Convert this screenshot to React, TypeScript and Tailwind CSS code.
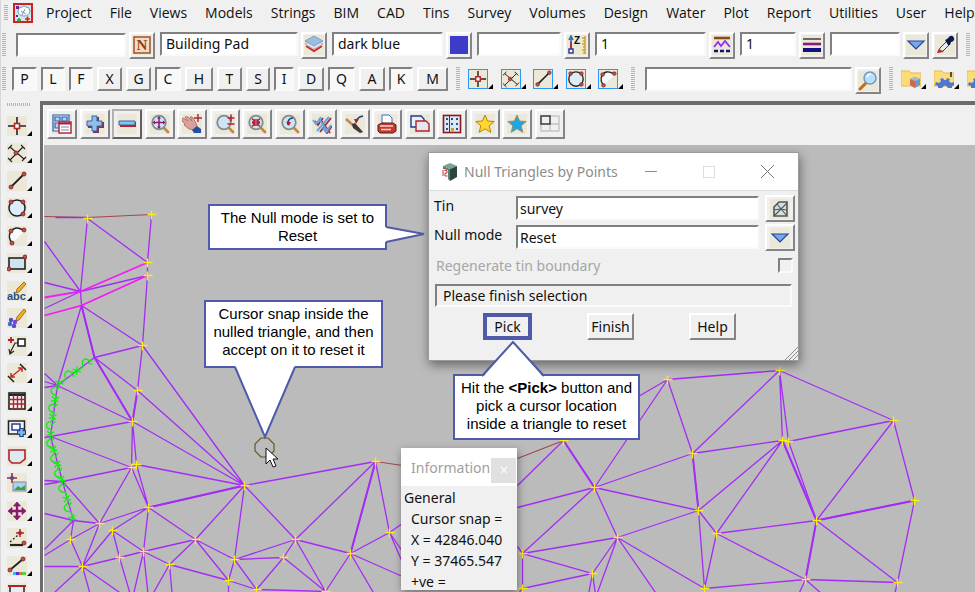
import React from "react";

const UI_FONT = "font-['Noto_Sans','Open_Sans',sans-serif]";
const RAISED =
  "border-2 border-t-white border-l-white border-r-[#858585] border-b-[#858585] bg-[#f0f0f0]";
const SUNKEN =
  "border-2 border-t-[#808080] border-l-[#808080] border-r-[#fafafa] border-b-[#fafafa]";

const INK = "#222222";
const RED = "#b3202c";
const NAVY = "#1c3f8c";

/* ------------------------------------------------------------------ icons */

function Dot({ x, y }: { x: number; y: number }) {
  return <circle cx={x} cy={y} r="2" fill="#c05050" stroke="#7a2020" strokeWidth="0.8" />;
}

const lens = (
  <>
    <path d="M14 14l4 4" stroke="#c08a3a" strokeWidth="2.6" strokeLinecap="round" />
    <circle cx="9" cy="8.500" r="6.800" fill="#cfe4f3" stroke="#7f8c96" strokeWidth="1.800" />
  </>
);

const STAR = "M10 1l2.600 6 6.600.500-5 4.300 1.600 6.500L10 14.800l-5.800 3.500 1.600-6.500-5-4.300 6.600-.500z";

const glyphs: Record<string, React.ReactNode> = {
  point: (
    <g fill="none">
      <path d="M1 10h6M13 10h6M10 1v6M10 13v6" stroke={INK} strokeWidth="1.600" />
      <rect x="7.500" y="7.500" width="5" height="5" fill="#fff" stroke="#c02020" strokeWidth="1.600" />
    </g>
  ),
  cross: (
    <g stroke={INK} strokeWidth="1.100" fill="none">
      <path d="M3 4l14 12M16 4L3 17M1 6l4-4M14 2l4 4M15 18l4-4M1 15l4 4" />
      <Dot x={9} y={10} />
    </g>
  ),
  line: (
    <g>
      <path d="M4 16L17 3" stroke={INK} strokeWidth="1.800" />
      <Dot x={4} y={16} />
      <Dot x={17} y={3} />
    </g>
  ),
  circle: (
    <g>
      <circle cx="10" cy="10" r="8" fill="#dcecf8" stroke={INK} strokeWidth="1.500" />
      <Dot x={4} y={4} />
      <Dot x={16} y={4} />
      <Dot x={16} y={16} />
    </g>
  ),
  arc: (
    <g>
      <path d="M16 4Q7-1 3 7Q1 12 5 17L17 6z" fill="#f6fafc" />
      <path d="M16 4Q7-1 3 7Q1 12 5 17" fill="none" stroke={INK} strokeWidth="1.500" />
      <Dot x={4} y={5} />
      <Dot x={17} y={4} />
      <Dot x={5} y={17} />
    </g>
  ),
  rect: (
    <g>
      <rect x="2" y="5" width="16" height="11" fill="#cfe3ee" stroke={INK} strokeWidth="1.600" />
      <Dot x={18} y={4} />
      <Dot x={2} y={16} />
    </g>
  ),
  text: (
    <g>
      <path d="M17 1l2 2-7 8-3 1 1-4z" fill="#f0b020" stroke="#8a5a10" strokeWidth="0.800" />
      <text x="0" y="19" fontSize="11" fontWeight="bold" fill="#1d4e80" fontFamily="Liberation Sans, sans-serif">abc</text>
    </g>
  ),
  paint: (
    <g>
      <path d="M17 1l2 2-7 9-3 1 1-4z" fill="#f0b020" stroke="#8a5a10" strokeWidth="0.800" />
      <g fill="#5a4ad0">
        <circle cx="4" cy="12" r="2.200" />
        <circle cx="8" cy="14" r="2.200" fill="#7a40e0" />
        <circle cx="3" cy="16" r="2.200" fill="#3070d0" />
        <circle cx="7" cy="18" r="2.200" />
      </g>
    </g>
  ),
  leader: (
    <g fill="none">
      <path d="M1 4h6M4 1v6" stroke={RED} strokeWidth="1.800" />
      <rect x="11" y="3" width="7" height="7" fill="#fff" stroke={INK} strokeWidth="1.600" />
      <path d="M11 7H8L3 17M2 13l1 5 4-3" stroke={INK} strokeWidth="1.200" />
    </g>
  ),
  dimension: (
    <g fill="none">
      <path d="M1 13l6 6M13 1l6 6" stroke={INK} strokeWidth="1.500" />
      <path d="M4 14L15 5M4 10v4h4M11 5h4v4" stroke="#c03030" strokeWidth="1.500" />
    </g>
  ),
  grid: (
    <g fill="none">
      <rect x="2" y="2" width="16" height="16" fill="#f4f4f4" stroke={INK} strokeWidth="1.600" />
      <path d="M2 4h16" stroke={INK} strokeWidth="2" />
      <path d="M6.500 4v14M10.500 4v14M14.500 4v14M2 8.500h16M2 13h16" stroke={RED} strokeWidth="1.400" />
    </g>
  ),
  monitor: (
    <g>
      <rect x="1.500" y="3" width="16" height="13" fill="#eef3f8" stroke={INK} strokeWidth="1.500" />
      <rect x="5" y="6" width="8" height="6" fill="#fff" stroke="#2030a0" strokeWidth="1.400" />
      <path d="M14.500 10v9M10 14.500h9" stroke={NAVY} strokeWidth="4.600" />
      <path d="M14.500 11v7M11 14.500h7" stroke="#80b8e8" strokeWidth="2.400" />
    </g>
  ),
  polygon: <path d="M2 4h16v9l-5 4H5l-3-3z" fill="#dfe9f2" stroke={RED} strokeWidth="1.600" />,
  image: (
    <g>
      <path d="M5 0v10M0 5h10" stroke={RED} strokeWidth="1.600" />
      <circle cx="5" cy="5" r="2" fill="#3a50a0" />
      <rect x="6" y="9" width="13" height="9" fill="#a8d4f4" stroke="#888" />
      <path d="M7 17l4-4 3 2 4-3v5z" fill="#40a040" />
    </g>
  ),
  move: (
    <g fill="#8a1a70" stroke="#8a1a70">
      <path d="M10 4v12M4 10h12" strokeWidth="2.400" />
      <path d="M10 1l3.500 4h-7zM10 19l3.500-4h-7zM1 10l4-3.500v7zM19 10l-4-3.500v7z" strokeWidth="0.800" />
    </g>
  ),
  survey: (
    <g>
      <path d="M3 17h13" stroke={INK} strokeWidth="2.200" />
      <path d="M3 14l8-7" stroke={INK} strokeWidth="1.300" strokeDasharray="2 2" />
      <path d="M13 1v8M9 5h8" stroke={RED} strokeWidth="1.500" />
      <circle cx="13" cy="5" r="2" fill={RED} />
      <Dot x={17} y={15} />
    </g>
  ),
  colour: (
    <g>
      <path d="M3 14L16 3" stroke={INK} strokeWidth="1.800" />
      <Dot x={3} y={14} />
      <Dot x={16} y={3} />
      <path d="M6 17.500h3" stroke="#20c0f0" strokeWidth="3" />
      <path d="M9 17.500h3" stroke="#5030e0" strokeWidth="3" />
      <path d="M12 17.500h3" stroke="#f07020" strokeWidth="3" />
      <path d="M15 17.500h4" stroke="#50d040" strokeWidth="3" />
    </g>
  ),
  frame: (
    <g>
      <path d="M3 3h14v14H3z" fill="#e6eef4" stroke={INK} strokeWidth="1.500" />
      <path d="M1 3h18" stroke={RED} strokeWidth="2" />
    </g>
  ),
  windows: (
    <g fill="#dcecf8" stroke="#2f5fae" strokeWidth="1.200">
      <path d="M1 1h16v16H1z" />
      <path d="M3 3h5v4H3zM10 3h5v4h-5zM3 9h5v5H3z" fill="#b8d4f0" />
      <rect x="7" y="8" width="12" height="11" fill="#fff" stroke={RED} strokeWidth="1.400" />
      <path d="M9 13h8M9 16h8" stroke="#6c8ec8" />
      <path d="M7 9.500h12" stroke={RED} strokeWidth="2" />
    </g>
  ),
  plus: (
    <g>
      <path d="M8 3h6v5h5v6h-5v5H8v-5H3V8h5z" fill="#8a3050" />
      <path d="M7 2h5v5h5v5h-5v5H7v-5H2V7h5z" fill="#8ec0ea" stroke="#2f66a8" />
    </g>
  ),
  minus: (
    <g>
      <path d="M3 8h16v5H3z" fill={RED} />
      <path d="M2 7h16v4H2z" fill="#8ec0ea" stroke="#2f66a8" />
    </g>
  ),
  zoomAll: (
    <g>
      {lens}
      <path d="M9 3v11M4 8.500h10" stroke="#8a1a70" strokeWidth="1.500" />
      <path d="M9 2l2 2.500H7zM9 15l2-2.500H7zM2.500 8.500L5 6.500v4zM15.500 8.500L13 6.500v4z" fill="#8a1a70" />
    </g>
  ),
  pan: (
    <g>
      <path d="M0 5q1-2 3 0l3 2-3-4q1-1 3 0l4 4-2-4q2-1 3 1l3 5 1 3-3 4-5-1-5-4 1-1-3-3z" fill="#dba09a" stroke="#a86860" strokeWidth="0.800" />
      <path d="M10 16l5-4 4 3v4h-7z" fill="#26509a" />
      <path d="M16 0v8M12 4h8" stroke={RED} strokeWidth="1.400" />
    </g>
  ),
  zoomInOut: (
    <g>
      {lens}
      <path d="M12.500 4h7M16 0.500v7M12.500 10h7" stroke={RED} strokeWidth="1.600" />
    </g>
  ),
  zoomShrink: (
    <g>
      {lens}
      <path d="M5 4.500l3 3M13 4.500l-3 3M5 12.500l3-3M13 12.500l-3-3M8 5v3H5M10 5v3h3M8 12V9H5M10 12V9h3" stroke={RED} strokeWidth="1.400" fill="none" />
    </g>
  ),
  zoomBack: (
    <g>
      {lens}
      <path d="M8 11V8q1-4 5-4" fill="none" stroke={NAVY} strokeWidth="1.600" />
      <path d="M6 8h5l-2 4z" fill={RED} />
    </g>
  ),
  ticks: (
    <g fill="none">
      <path d="M2 6l3 4 5-7M8 5l9 13M18 3L7 17M11 14l3 4 5-7" stroke="#9a3040" strokeWidth="1.800" transform="translate(1 1)" />
      <path d="M1 6l3 4 5-7M7 5l9 13M17 3L5 17M11 14l3 4 5-7" stroke="#6aa4e0" strokeWidth="2" />
    </g>
  ),
  brush: (
    <g>
      <path d="M1 5l8 7" stroke="#c08a50" strokeWidth="2.600" />
      <path d="M7 10l3-1 8 9-3 1-7-5z" fill="#3a3a3a" />
      <path d="M11 8q1-5 7-6" fill="none" stroke="#204080" strokeWidth="1.500" />
      <path d="M9 5h5l-3 5z" fill={RED} />
    </g>
  ),
  print: (
    <g>
      <path d="M5 9V1h7l3 3v6z" fill="#fff" stroke="#3a70c0" />
      <path d="M1 11l4-2h11l3 2v6l-3 2H3l-2-2z" fill="#c43a30" stroke="#6c1510" />
      <path d="M3 12h13M4 15.500h10" stroke="#f3d7c8" strokeWidth="1.400" />
    </g>
  ),
  copy: (
    <g strokeWidth="1.400">
      <path d="M1 2h10l3 3v8H1z" fill="#e8f1f9" stroke={NAVY} />
      <path d="M6 7h10l3 3v7H6z" fill="#e4e8ee" stroke={RED} />
    </g>
  ),
  plan: (
    <g>
      <rect x="1.500" y="1.500" width="17" height="17" fill="#dce8f4" stroke="#8a1a20" strokeWidth="1.600" />
      <path d="M4 4h2v2H4zM9 4h2v2H9zM14 4h2v2h-2zM4 9h2v2H4zM9 9h2v2H9zM14 9h2v2h-2zM4 14h2v2H4zM14 14h2v2h-2z" fill="#28508c" />
      <path d="M9 14h3v3H9z" fill="#d0a020" />
      <path d="M7.500 2v16" stroke="#8a1a20" />
    </g>
  ),
  starGold: <path d={STAR} fill="#ffd72e" stroke="#b98010" />,
  starBlue: <path d={STAR} fill="#18a8e8" stroke="#b08a50" />,
  layout: (
    <g fill="none">
      <path d="M10 2h9v15H1V10" stroke="#c4c4c4" strokeWidth="1.400" />
      <path d="M10 10h9M10 10v7" stroke="#c4c4c4" strokeWidth="1.400" />
      <rect x="1" y="2" width="9" height="8" stroke="#444" strokeWidth="1.600" />
    </g>
  ),
  name: (
    <g>
      <rect x="2" y="2" width="16" height="16" fill="#f0ddc8" stroke="#a04818" strokeWidth="1.400" />
      <text x="10" y="15" textAnchor="middle" fontSize="15" fontWeight="bold" fill="#983c0c" fontFamily="Liberation Serif, serif">N</text>
    </g>
  ),
  layers: (
    <g>
      <path d="M2 11l8 5 8-5" fill="none" stroke="#d02828" strokeWidth="2" />
      <path d="M1 9l9 5 9-5-9-5z" fill="#dfe6ee" stroke="#9ab" strokeWidth="0.800" />
      <path d="M1 6l9 5 9-5-9-5z" fill="#9dbde0" stroke="#6f94bd" strokeWidth="0.800" />
    </g>
  ),
  swatch: <rect x="1" y="1" width="18" height="18" fill="#3c3cc8" />,
  height: (
    <g>
      <path d="M4 14V3M2 5l2-4 2 4" stroke="#3070b0" strokeWidth="1.600" fill="none" />
      <path d="M4 7v7" stroke="#b02020" strokeWidth="1.600" />
      <rect x="2" y="14" width="4" height="4" fill="#fff" stroke="#2030a0" strokeWidth="1.400" />
      <text x="7" y="9" fontSize="10" fontWeight="bold" fill="#111" fontFamily="Liberation Sans, sans-serif">Z</text>
      <path d="M18 1v18M15 3h3M16 6h2M15 9h3M16 12h2M15 15h3M16 18h2" stroke="#d0a030" strokeWidth="1.400" />
    </g>
  ),
  breakline: (
    <g fill="none">
      <path d="M2 3h16" stroke="#8a4a18" strokeWidth="2.600" />
      <path d="M2 12l4-5 3 4 4-5 5 6" stroke="#9030e8" strokeWidth="1.800" />
      <path d="M2 16h16" stroke="#101080" strokeWidth="2.600" strokeDasharray="4 2" />
    </g>
  ),
  weights: (
    <g>
      <path d="M1 4h18" stroke="#333" strokeWidth="1.400" />
      <path d="M1 9h18" stroke="#8a1a80" strokeWidth="2.600" />
      <path d="M1 15h18" stroke="#101080" strokeWidth="4" />
    </g>
  ),
  down: <path d="M2 6h16l-8 8z" fill="#78a8ea" stroke="#2444a0" strokeWidth="1.200" />,
  picker: (
    <g>
      <path d="M3 17l2-4 7-7 3 3-7 7z" fill="#e8eef4" stroke="#444" />
      <path d="M2 18l2-4 5 3z" fill="#c02828" />
      <path d="M10 5l2-1 3-3q3-1 4 2t-3 4l-1 3-2 0z" fill="#101850" />
    </g>
  ),
  search: (
    <g>
      <path d="M2 18l6-6" stroke="#c06c20" strokeWidth="3" strokeLinecap="round" />
      <circle cx="12" cy="7" r="6" fill="#b8e0fa" stroke="#6a9cc8" strokeWidth="1.500" />
      <path d="M9 6q1-3 4-3" stroke="#fff" strokeWidth="1.500" fill="none" />
    </g>
  ),
  folderCube: (
    <g>
      <path d="M0 2h8l2 2h10v13H0z" fill="#fbdc78" stroke="#e6bc50" />
      <path d="M9 10l5-2 5 2v6l-5 3-5-3z" fill="#6a98cc" />
      <path d="M9 10l5 2v7l-5-3z" fill="#d06848" />
      <path d="M9 10l5-2 5 2-5 2z" fill="#a8b8c4" />
    </g>
  ),
  folderGear: (
    <g>
      <path d="M0 2h8l2 2h10v13H0z" fill="#fbdc78" stroke="#e6bc50" />
      <path d="M4 19v-2l-3-1 1-3 3 1 2-2-1-2 3-1 1 2h2l1-2 3 1-1 2 2 2 3-1 1 3-3 1v2h-4q-3-5-6 0z" fill="#4c78d0" />
      <path d="M17 3v5" stroke="#222" strokeWidth="1.500" />
    </g>
  ),
  tin: (
    <g stroke="#555" strokeWidth="1.100">
      <path d="M4 17V8l5-5h8v14z" fill="#cfe0e4" strokeWidth="1.600" />
      <path d="M4 17L17 4M7 5l10 12M4 11l6-1 7 1" fill="none" />
    </g>
  ),
  app: (
    <g>
      <rect x="1" y="1" width="18" height="18" fill="#cfe8ec" stroke="#d02020" strokeWidth="2" />
      <path d="M5 8q0-4 4-4 2-2 4 0 4 0 4 4-1 5-6 5-6 0-6-5z" fill="#fff" stroke="#60a8b8" />
      <path d="M3 3h3v3H3zM3 12h2v2H3z" fill="#7020a0" />
      <path d="M12 16h5M14.500 13.500v5" stroke="#e02020" strokeWidth="1.600" />
      <path d="M4 17h4M6 15v4" stroke="#20a030" strokeWidth="1.600" />
      <path d="M8 8l5 3M12 6l-3 6" stroke="#7890c0" />
    </g>
  ),
};

function Glyph({ name, size = "h-5 w-5", tint = true }: { name: string; size?: string; tint?: boolean }) {
  return (
    <svg viewBox="0 0 20 20" aria-hidden="true" className={`${size} shrink-0 ${tint ? "bg-[#ece8d8]" : ""}`}>
      {glyphs[name]}
    </svg>
  );
}

/* --------------------------------------------------------------- controls */

function Grip({ className = "h-6" }: { className?: string }) {
  return (
    <span
      className={`${className} w-1 shrink-0 bg-[repeating-linear-gradient(to_bottom,#b4b4b4_0_1px,transparent_1px_2px)]`}
    />
  );
}

function IconButton({ name, tint = true }: { name: string; tint?: boolean }) {
  return (
    <button type="button" aria-label={name} className={`flex h-[27px] w-[26px] shrink-0 items-center justify-center ${RAISED}`}>
      <Glyph name={name} tint={tint} />
    </button>
  );
}

function FlyoutButton({ name, outlined = false }: { name: string; outlined?: boolean }) {
  return (
    <button type="button" aria-label={name} className="flex shrink-0 items-end">
      <span className={outlined ? "border border-[#2f95f0]" : ""}>
        <Glyph name={name} size={outlined ? "block h-[18px] w-[18px]" : "block h-5 w-5"} tint={!name.startsWith("folder")} />
      </span>
      <svg viewBox="0 0 5 5" className="h-[5px] w-[5px]" aria-hidden="true">
        <path d="M5 0v5H0z" fill="#000" />
      </svg>
    </button>
  );
}

function Field({ label, value = "", width }: { label: string; value?: string; width: string }) {
  return (
    <input
      aria-label={label}
      defaultValue={value}
      className={`h-6 min-w-0 shrink-0 bg-white px-1 text-[14px] outline-none ${width} ${SUNKEN}`}
    />
  );
}

const menus = [
  "Project", "File", "Views", "Models", "Strings", "BIM", "CAD", "Tins", "Survey", "Volumes",
  "Design", "Water", "Plot", "Report", "Utilities", "User", "Help",
];

const snaps: [string, boolean, string][] = [
  ["P", true, "w-[25px]"], ["L", true, "w-[24px]"], ["F", true, "w-[24px]"], ["X", false, "w-[25px]"],
  ["G", false, "w-[25px]"], ["C", true, "w-[26px]"], ["H", false, "w-[28px]"], ["T", false, "w-[25px]"],
  ["S", false, "w-[24px]"], ["I", true, "w-[20px]"], ["D", false, "w-[26px]"], ["Q", true, "w-[27px]"],
  ["A", false, "w-[26px]"], ["K", true, "w-[24px]"], ["M", false, "w-[31px]"],
];

function pairs(list: string[]): string[][] {
  const out: string[][] = [];
  for (let i = 0; i < list.length; i += 2) out.push(list.slice(i, i + 2));
  return out;
}

const cadTools = pairs([
  "point", "cross", "line", "circle", "arc", "rect", "text", "paint", "leader", "dimension",
  "grid", "monitor", "polygon", "image", "move", "survey", "colour", "frame",
]);

const viewTools = pairs([
  "windows", "plus", "minus", "zoomAll", "pan", "zoomInOut", "zoomShrink", "zoomBack",
  "ticks", "brush", "print", "copy", "plan", "starGold", "starBlue", "layout",
]);

const snapTools = pairs(["point", "cross", "line", "circle", "arc"]);

/* ------------------------------------------------------------ survey mesh */

const nodes: Record<string, [number, number]> = {
  A: [87, 218], B: [151, 214], C: [147, 262], D: [147, 275], G: [142, 345], J: [137, 390],
  K: [132, 421], M: [131, 467], N: [136, 464], O: [244, 485], P: [148, 507], Q: [99, 523],
  R: [112, 530], S: [70, 539], T: [82, 566], U: [119, 557], V: [143, 551], W: [195, 539],
  X: [234, 559], Y: [169, 564], Z: [228, 580], a: [256, 589], d: [375, 461], e: [295, 539],
  f: [283, 557], g: [350, 553], h: [389, 532], i: [325, 591], j: [522, 553], k: [522, 588],
  l: [667, 379], m: [692, 453], n: [594, 487], o: [698, 510], p: [716, 533], q: [617, 537],
  r: [592, 573], s: [704, 588], t: [563, 440], u: [779, 370], v: [782, 440], w: [788, 441],
  x: [893, 420], y: [914, 500], z: [816, 520], "1": [805, 579], "2": [897, 582],
};

const bare: Record<string, [number, number]> = {
  E: [80, 291], F: [81, 305], H: [94, 357], I: [57, 385], L: [50, 436], b: [73, 520], c: [62, 481],
};

const at = (id: string) => (nodes[id] ?? bare[id]).join(" ");

const edges = (
  "BC CD DG AE AC ED EF FG FH FI HG HJ HK IK GJ GO JK JO KO KM KN LK LM MN NO NP MP cM MQ " +
  "OP Od OW OX Oe PQ PR PV PW Qb Qc QS QT RT RV RU Sb ST TU UV VW VY WY WZ WX YZ XZ Xe Xf Xa Za " +
  "ef eg ei fa fi ai de dg dh gh gi tn nl nm no nj nq lt lu lm mu mv mo ov oq op os pv pz p1 ps " +
  "qj qr qs jr jk kr s1 uv uw ux wx vz wz xz xy yz y2 z2 z1 12 vw IL Lc cb HI"
).split(" ");

const meshPath = edges.map((e) => `M${at(e[0])}L${at(e[1])}`).join("");

const strays =
  "M44 241L80 291M44 282L80 291M44 308L80 291M44 373L57 385M44 381L57 385M44 387L57 385" +
  "M44 437L50 436M44 480L62 481M44 484L62 481M44 513L73 520M44 549L73 520M44 555L70 539" +
  "M44 566L82 566M82 566L54 592M82 566L90 595M82 566L122 594M119 557L131 598M143 551L132 598" +
  "M143 551L148 598M169 564L152 594M169 564L172 598M228 580V598M350 553L374 594M350 553L402 576" +
  "M389 532L402 523M389 532L402 562M389 532L402 551M563 440L517 485M594 487L517 507" +
  "M617 537L655 592M617 537L597 592M592 573L588 594M592 573L595 594M805 579L798 594" +
  "M805 579L822 594M897 582L894 594M517 546L522 553M522 588L517 594M55 217H87";

const heavy = ["FH", "dg", "mo", "OP", "HK", "vz", "z1", "zy", "tn", "JK"]
  .map((e) => `M${at(e[0])}L${at(e[1])}`)
  .join("");

const crosses = Object.values(nodes)
  .map(([x, y]) => `M${x - 4} ${y}h9M${x} ${y - 4}v9`)
  .join("");

/* Vegetation line: scallops on the outer side of each span, with a tick between them. */
function scallops(points: [number, number][]): string {
  let d = "";
  for (let i = 0; i + 1 < points.length; i++) {
    const [x0, y0] = points[i];
    const [x1, y1] = points[i + 1];
    const len = Math.hypot(x1 - x0, y1 - y0);
    const count = Math.max(1, Math.round(len / 17));
    const ux = (x1 - x0) / len;
    const uy = (y1 - y0) / len;
    const step = len / count;
    const pt = (along: number, out: number) =>
      `${(x0 + ux * along - uy * out).toFixed(1)} ${(y0 + uy * along + ux * out).toFixed(1)}`;
    for (let k = 0; k < count; k++) {
      const s = k * step;
      d += `M${pt(s, 0)}L${pt(s + 3, 2)}C${pt(s + 4, 7)} ${pt(s + 10, 7)} ${pt(s + 11, 0)}`;
      d += `L${pt(s + step, 0)}M${pt(s + step - 5, 4)}L${pt(s + step, -3)}`;
      d += `M${pt(s + step - 5, -3)}L${pt(s + step, 4)}M${pt(s + 2, -3)}L${pt(s + 6, 1)}`;
    }
  }
  return d;
}

const vegetation = scallops([[92, 360], [57, 384], [50, 436], [62, 481], [73, 520]]);

function Mesh() {
  return (
    <svg className="absolute inset-0 h-full w-full" aria-hidden="true">
      <g transform="translate(-43.500 -144.500)" fill="none">
        <path d={meshPath + strays} stroke="#a42cf6" strokeWidth="1.300" />
        <path d={heavy} stroke="#a42cf6" strokeWidth="2" />
        <path d="M44 297L80 291L147 262M44 315L81 305L147 275" stroke="#f31cf3" strokeWidth="1.800" />
        <path d="M44 216L87 217L151 214M375 461L402 465M517 458L563 440" stroke="#a04848" strokeWidth="1.200" />
        <path d={vegetation} stroke="#10ee10" strokeWidth="1.300" />
        <path d={crosses} stroke="#f8f010" strokeWidth="1.300" />
      </g>
    </svg>
  );
}

/* --------------------------------------------------------------- callouts */

const CALLOUT =
  "absolute border-2 border-[#4f5aa8] bg-white text-center font-['Liberation_Sans',Arial,sans-serif] text-[15px] leading-[18px] text-black";

function Callouts() {
  return (
    <>
      <div className={`${CALLOUT} left-[164px] top-[59px] h-[46px] w-[179px] px-2 pt-[3px]`}>
        The Null mode is set to Reset
        <svg className="absolute -right-[42px] top-5 h-[18px] w-[42px]" aria-hidden="true">
          <path d="M0 1L2 1L38 8L2 16L0 16" fill="#fff" />
          <path d="M1 1L39 8L1 16" fill="none" stroke="#4f5aa8" strokeWidth="2" />
        </svg>
      </div>
      <div className={`${CALLOUT} left-[160px] top-[155px] h-[68px] w-[179px] pt-[3px]`}>
        Cursor snap inside the nulled triangle, and then accept on it to reset it
        <svg className="absolute left-7 top-16 h-[74px] w-[62px]" aria-hidden="true">
          <path d="M1 0L31 71L61 0" fill="#fff" />
          <path d="M1 1L31 71L61 1" fill="none" stroke="#4f5aa8" strokeWidth="2" />
        </svg>
      </div>
      <div className={`${CALLOUT} left-[409px] top-[229px] h-[66px] w-[187px] px-1 pt-[3px]`}>
        Hit the <b>&lt;Pick&gt;</b> button and pick a cursor location inside a triangle to reset
        <svg className="absolute -top-[36px] left-[26px] h-[37px] w-16" aria-hidden="true">
          <path d="M2 37L32 2L62 37" fill="#fff" />
          <path d="M1 36L32 2L63 36" fill="none" stroke="#4f5aa8" strokeWidth="2" />
        </svg>
      </div>
      <svg className="absolute left-[210px] top-[292px] h-8 w-6" aria-hidden="true">
        <path d="M7 1h7l6 6v7l-6 6H7l-6-6V7z" fill="none" stroke="#5c5c28" strokeWidth="1.200" />
        <path d="M12 11v16l4-4 3 7 3-1-3-7h5z" fill="#fff" stroke="#111" />
      </svg>
    </>
  );
}

/* ---------------------------------------------------------------- dialogs */

const ACTION = `h-[27px] w-[47px] text-[14px] leading-none ${RAISED}`;

function NullDialog() {
  return (
    <section className="absolute left-[384px] top-[7px] h-[209px] w-[371px] border border-[#9a9a9a] bg-[#f0f0f0] shadow-[1px_4px_10px_rgba(0,0,0,0.45)]">
      <header className="flex h-[38px] items-center border-b border-[#dcdcdc] bg-white text-[#8c8c8c]">
        <svg viewBox="0 0 18 20" className="ml-3 h-5 w-[18px]" aria-hidden="true">
          <path d="M2 4l7-3 7 3-7 3z" fill="#7ba394" />
          <path d="M9 7l7-3v11l-7 4z" fill="#2b463b" />
          <path d="M2 4l7 3v12l-2-2V8L2 7z" fill="#58806f" />
          <path d="M2 8v6M3.500 8.500h2.500v2.500H4v3h2.500" stroke="#d03030" fill="none" />
        </svg>
        <h2 className="ml-[5px] text-[14px]">Null Triangles by Points</h2>
        <div className="ml-auto flex items-center gap-[46px] pr-6">
          <button type="button" aria-label="Minimise" className="w-3 border-t border-[#8c8c8c]" />
          <button type="button" aria-label="Maximise" className="h-3 w-3 border border-[#dedede]" />
          <button type="button" aria-label="Close">
            <svg viewBox="0 0 13 13" className="block h-[13px] w-[13px]" aria-hidden="true">
              <path d="M0 0l13 13M13 0L0 13" stroke="#777" />
            </svg>
          </button>
        </div>
      </header>
      <form className="pl-1 pr-[3px] pt-1" onSubmit={(e) => e.preventDefault()}>
        <div className="flex h-[29px] items-start">
          <label htmlFor="tin" className="w-[83px] pl-px text-[14px] leading-[22px]">Tin</label>
          <input id="tin" defaultValue="survey" className={`mr-1.5 mt-px h-6 min-w-0 flex-1 bg-white px-0.5 text-[14px] ${SUNKEN}`} />
          <button type="button" aria-label="Choose tin" className={`flex h-[27px] w-[30px] items-center justify-center ${RAISED}`}>
            <Glyph name="tin" />
          </button>
        </div>
        <div className="flex h-[29px] items-start">
          <label htmlFor="mode" className="w-[83px] pl-px text-[14px] leading-[22px]">Null mode</label>
          <select id="mode" className={`mr-1.5 mt-px h-6 min-w-0 flex-1 appearance-none rounded-none bg-white px-0.5 text-[14px] ${SUNKEN}`}>
            <option>Reset</option>
          </select>
          <button type="button" aria-label="Open list" className={`flex h-[27px] w-[30px] items-center justify-center ${RAISED}`}>
            <Glyph name="down" />
          </button>
        </div>
        <div className="mb-[7px] flex h-6 items-center justify-between pl-[3px] pr-0.5">
          <label htmlFor="regen" className="text-[14px] text-[#a6a6a6]">Regenerate tin boundary</label>
          <input id="regen" type="checkbox" disabled className={`h-[15px] w-[15px] appearance-none ${SUNKEN}`} />
        </div>
        <div className="flex pl-0.5 pr-[3px]">
          <input
            aria-label="Status"
            readOnly
            defaultValue="Please finish selection"
            className={`h-[23px] min-w-0 flex-1 bg-[#f0f0f0] px-1.5 text-[14px] ${SUNKEN}`}
          />
        </div>
        <div className="flex gap-[55px] pl-[50px] pt-1.5">
          <button type="button" className="h-[27px] w-[49px] border-4 border-[#4f5aa8] text-[14px] leading-none">Pick</button>
          <button type="button" className={ACTION}>Finish</button>
          <button type="button" className={ACTION}>Help</button>
        </div>
      </form>
      <svg className="absolute bottom-0 right-0 h-[14px] w-[14px]" aria-hidden="true">
        <path d="M1 14L14 1M5 14l9-9M9 14l5-5" stroke="#8a8a8a" />
      </svg>
    </section>
  );
}

function InfoPanel() {
  return (
    <section className="absolute left-[357px] top-[303px] h-[142px] w-[116px] overflow-hidden bg-[#f0f0f0] shadow-[1px_3px_8px_rgba(0,0,0,0.4)]">
      <header className="flex h-[38px] items-center bg-white pl-2.5">
        <h2 className="text-[14px] text-[#a0a0a0]">Information</h2>
        <button type="button" aria-label="Close" className="ml-auto mr-px mt-1.5 flex h-[25px] w-[25px] shrink-0 items-center justify-center bg-[#e0e0e0]">
          <svg viewBox="0 0 8 8" className="h-2 w-2" aria-hidden="true">
            <path d="M1 1l6 6M7 1L1 7" stroke="#f8f8f8" strokeWidth="1.500" />
          </svg>
        </button>
      </header>
      <div className="pl-[3px] pt-px text-[14px] leading-[21px]">
        <h3>General</h3>
        <ul className="whitespace-nowrap pl-[7px]">
          <li>Cursor snap =</li>
          <li>X = 42846.040</li>
          <li>Y = 37465.547</li>
          <li>+ve =</li>
        </ul>
      </div>
    </section>
  );
}

/* -------------------------------------------------------------------- app */

export default function App() {
  return (
    <div className={`flex h-screen flex-col overflow-hidden border-l border-[#d8d8d8] bg-[#f0f0f0] text-[14px] text-[#111111] ${UI_FONT}`}>
      <nav className="flex h-[26px] shrink-0 items-center pl-[3px]">
        <Grip className="h-4" />
        <span className="ml-[5px] mr-[13px] flex"><Glyph name="app" tint={false} /></span>
        <div className="flex gap-[18px] font-['Open_Sans','Noto_Sans',sans-serif]">
          {menus.map((m) => (
            <button key={m} type="button" className="leading-5">{m}</button>
          ))}
        </div>
      </nav>

      <div className="flex h-[38px] shrink-0 items-center gap-[3px] pl-px">
        <Grip />
        <span className="w-1 shrink-0" />
        <Field label="Name" width="w-[110px]" />
        <IconButton name="name" />
        <span className="flex shrink-0 gap-[3px] pl-0.5"><Field label="Model" value="Building Pad" width="w-[138px]" /><IconButton name="layers" /></span>
        <span className="flex shrink-0 gap-[3px] pl-0.5"><Field label="Colour" value="dark blue" width="w-[111px]" /><IconButton name="swatch" tint={false} /></span>
        <span className="flex shrink-0 gap-[3px] pl-0.5"><Field label="Height" width="w-[84px]" /><IconButton name="height" /></span>
        <span className="flex shrink-0 gap-[3px] pl-0.5"><Field label="Line style" value="1" width="w-[111px]" /><IconButton name="breakline" /></span>
        <span className="flex shrink-0 gap-[3px] pl-0.5"><Field label="Weight" value="1" width="w-[56px]" /><IconButton name="weights" /></span>
        <span className="flex shrink-0 gap-[3px] pl-0.5"><Field label="Tinable" width="w-[70px]" /><IconButton name="down" /></span>
        <IconButton name="picker" />
        <span className="w-0.5 shrink-0" />
        <Grip />
      </div>

      <div className="flex h-[37px] shrink-0 items-start pl-px pt-[3px]">
        <Grip />
        <div className="ml-1.5 flex shrink-0 gap-1">
          {snaps.map(([t, on, w]) => (
            <button
              key={t}
              type="button"
              aria-pressed={on}
              className={`h-6 leading-none ${w} ${on ? `bg-[#f8f8f8] ${SUNKEN}` : RAISED}`}
            >
              {t}
            </button>
          ))}
        </div>
        <span className="ml-2 flex"><Grip /></span>
        <div className="ml-2 mt-0.5 flex shrink-0">
          {snapTools.map((pair) => (
            <div key={pair[0]} className="grid w-[65px] grid-cols-2">
              {pair.map((n) => <FlyoutButton key={n} name={n} outlined />)}
            </div>
          ))}
        </div>
        <span className="-ml-8 flex"><Grip /></span>
        <span className="ml-2.5 mr-[3px] flex"><Field label="Search" width="w-[207px]" /></span>
        <IconButton name="search" />
        <span className="ml-2 mr-2 flex"><Grip /></span>
        <div className="mt-0.5 flex shrink-0 gap-2">
          <FlyoutButton name="folderCube" />
          <FlyoutButton name="folderGear" />
          <FlyoutButton name="folderGear" />
        </div>
      </div>

      <div className="flex min-h-0 flex-1">
        <aside className="w-[39px] shrink-0 overflow-hidden pl-1.5 pt-0.5">
          <div className="mb-1.5 h-[3px] w-6 bg-[repeating-linear-gradient(to_right,#b4b4b4_0_1px,transparent_1px_2px)]" />
          {cadTools.map((pair) => (
            <div key={pair[0]} className="grid h-[55px] grid-rows-2 items-center justify-start">
              {pair.map((n) => <FlyoutButton key={n} name={n} />)}
            </div>
          ))}
        </aside>

        <main className="flex min-w-0 flex-1 flex-col border-l-[3px] border-t-4 border-[#6c6c6c]">
          <div className="flex h-10 shrink-0 items-center border-l border-white pb-0.5 pl-[3px]">
            {viewTools.map((pair) => (
              <div key={pair[0]} className="grid w-[65px] grid-cols-2">
                {pair.map((n) => (
                  <button
                    key={n}
                    type="button"
                    aria-label={n}
                    className={`flex h-[30px] w-[30px] items-center justify-center ${
                      n === "minus" ? "border-2 border-t-[#b0b0b0] border-l-[#b0b0b0] border-r-[#606060] border-b-[#606060]" : RAISED
                    }`}
                  >
                    <Glyph name={n} tint={n !== "layout"} />
                  </button>
                ))}
              </div>
            ))}
          </div>
          <div className="relative min-h-0 flex-1 overflow-hidden border-l border-white bg-[#bbbbbb]">
            <Mesh />
            <NullDialog />
            <Callouts />
            <InfoPanel />
          </div>
        </main>
      </div>
    </div>
  );
}
